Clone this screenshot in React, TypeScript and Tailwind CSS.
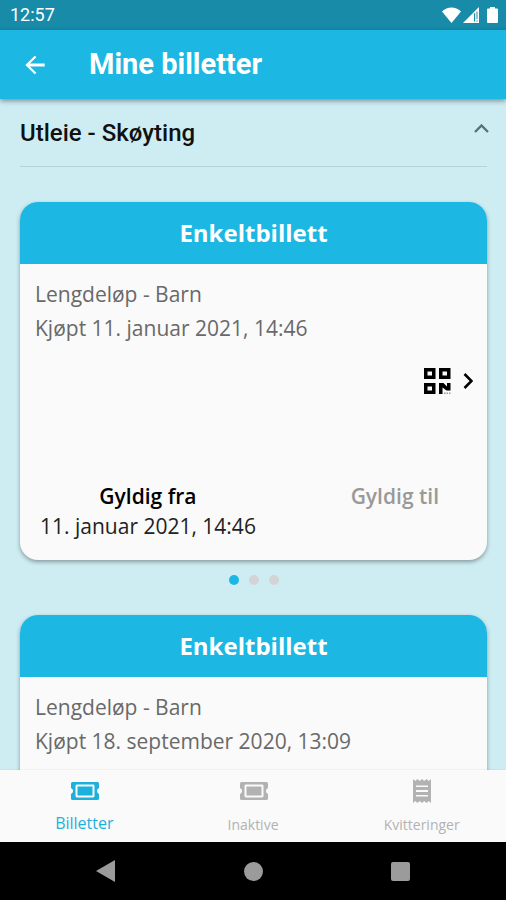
import type { ReactNode } from "react";
import { clsx } from "clsx";

interface Ticket {
  id: number;
  type: string;
  product: string;
  purchased: string;
  validFrom?: string;
  pages: number;
}

const tickets: Ticket[] = [
  {
    id: 1,
    type: "Enkeltbillett",
    product: "Lengdeløp - Barn",
    purchased: "Kjøpt 11. januar 2021, 14:46",
    validFrom: "11. januar 2021, 14:46",
    pages: 3,
  },
  {
    id: 2,
    type: "Enkeltbillett",
    product: "Lengdeløp - Barn",
    purchased: "Kjøpt 18. september 2020, 13:09",
    pages: 3,
  },
];

const StatusBar = () => (
  <div className="flex h-[30px] shrink-0 items-center justify-between bg-[#188ba9] pl-2.5 pr-2 font-[Roboto] text-lg text-white">
    <span>12:57</span>
    <div className="flex items-center">
      <svg className="h-4 w-[19px]" viewBox="0 0 19 16" fill="currentColor">
        <path d="M9.500 16 0 4.500C5.500-1 13.500-1 19 4.500z" />
      </svg>
      <svg className="ml-0.5 h-4 w-4" viewBox="0 0 16 16" fill="currentColor">
        <path
          fillRule="evenodd"
          d="M16 0v16H0zM11 6.800v7.700h1.200V5.600zM13.500 4.500v7.500h1V4.500zM13.500 13.300v1.200h1v-1.200z"
        />
      </svg>
      <svg className="ml-2 h-4 w-[11px]" viewBox="0 0 11 16" fill="currentColor">
        <path d="M3 0h5v1.500h2q1 0 1 1V15q0 1-1 1H1q-1 0-1-1V2.500q0-1 1-1h2z" />
      </svg>
    </div>
  </div>
);

const Header = () => (
  <header className="z-10 flex h-[69px] shrink-0 items-center bg-[#1cb7e2] pl-[21px] text-white shadow-[0_2px_5px_rgba(0,0,0,0.4)]">
    <button type="button" aria-label="Tilbake">
      <svg className="size-7" viewBox="0 0 24 24" fill="currentColor">
        <path d="M20.300 10.800H7.600l5.600-5.400L11.800 4 3.700 12l8.100 8 1.400-1.400-5.600-5.400h12.700z" />
      </svg>
    </button>
    <h1 className="ml-10 font-[Roboto] text-[29px] font-bold">
      Mine billetter
    </h1>
  </header>
);

const QrIcon = () => (
  <svg className="h-[26px] w-[27px]" viewBox="0 0 27 26" fill="currentColor">
    <path
      fillRule="evenodd"
      d="M0 0h11.500v11H0zM3.500 3.500v4h4.500v-4zM15 0h11.500v11H15zM18.500 3.500v4H23v-4zM0 15h11.500v11H0zM3.500 18.500v4h4.500v-4z"
    />
    <path d="M15 15h4.500l3.500 3.500V15h3.500v7.500h-4L18.500 19.500V26H15z" />
    <path
      fill="#999"
      d="M20 24.500h1.500V26H20zM22.500 24.500H24V26h-1.500zM25 24.500h1.500V26H25z"
    />
  </svg>
);

const TicketCard = ({ ticket }: { ticket: Ticket }) => (
  <article className="overflow-hidden rounded-[18px] bg-[#fafafa] shadow-[0_2px_4px_rgba(0,0,0,0.35)]">
    <h3 className="flex h-[62px] items-center justify-center bg-[#1cb7e2] text-2xl font-bold text-white">
      {ticket.type}
    </h3>
    <div className="px-[15px] pt-[13px] text-[21px] leading-[34px] text-[#696969]">
      <p>{ticket.product}</p>
      <p>{ticket.purchased}</p>
    </div>
    <div className="mt-[23px] flex justify-end pr-3.5">
      <button
        type="button"
        aria-label="Vis QR-kode"
        className="flex items-center gap-3 text-black"
      >
        <QrIcon />
        <svg
          className="h-4 w-2.5"
          viewBox="0 0 10 16"
          fill="none"
          stroke="currentColor"
          strokeWidth="2.600"
        >
          <path d="m1.500 1 7 7-7 7" />
        </svg>
      </button>
    </div>
    {ticket.validFrom && (
      <div className="mt-[87px] flex justify-between pb-[19px] pl-5 pr-12 text-[21px] leading-[30px]">
        <div className="text-center text-[#222]">
          <p className="font-semibold text-black">Gyldig fra</p>
          <p>{ticket.validFrom}</p>
        </div>
        <p className="font-semibold text-[#999]">Gyldig til</p>
      </div>
    )}
  </article>
);

const PageDots = ({ count }: { count: number }) => (
  <div className="flex justify-center gap-2.5 pt-[15px]">
    {Array.from({ length: count }, (_, i) => (
      <span
        key={i}
        className={clsx(
          "size-2.5 rounded-full",
          i === 0 ? "bg-[#1cb7e2]" : "bg-[#d4d4d6]",
        )}
      />
    ))}
  </div>
);

const TicketIcon = () => (
  <svg className="h-[18px] w-[30px]" viewBox="-2 0 30 18" fill="currentColor">
    <path
      fillRule="evenodd"
      d="M1.500 0h25Q28 0 28 1.500V6a3.200 3.200 0 0 0 0 6v4.500q0 1.500-1.500 1.500h-25Q0 18 0 16.500V12a3.200 3.200 0 0 0 0-6V1.500Q0 0 1.500 0zM6 2.600Q4.500 2.600 4.500 4v10q0 1.400 1.500 1.400h16q1.500 0 1.500-1.400V4q0-1.400-1.500-1.400z"
    />
    <rect x="6.500" y="4.500" width="15" height="9" />
  </svg>
);

const ReceiptIcon = () => (
  <svg className="h-6 w-[18px]" viewBox="0 0 18 24" fill="currentColor">
    <path
      fillRule="evenodd"
      d="M0 0l2.250 2L4.500 0l2.250 2L9 0l2.250 2L13.500 0l2.250 2L18 0v24l-2.250-2-2.250 2-2.250-2L9 24l-2.250-2-2.250 2-2.250-2L0 24zM3 6.500V8h12V6.500zM3 11v2h12v-2zM3 16v1.500h12V16z"
    />
  </svg>
);

interface TabProps {
  label: string;
  icon: ReactNode;
  active?: boolean;
}

const Tab = ({ label, icon, active }: TabProps) => (
  <a
    href="#"
    aria-current={active ? "page" : undefined}
    className={clsx(
      "flex flex-1 flex-col items-center pt-[9px]",
      active
        ? "text-base leading-6 text-[#1cb0dc]"
        : "text-sm leading-7 text-[#b2b2b2]",
    )}
  >
    <span className="flex h-6 items-center">{icon}</span>
    <span className="mt-2">{label}</span>
  </a>
);

const SystemNav = () => (
  <div className="flex h-[58px] shrink-0 items-center justify-around bg-black px-8 text-[#9b9b9b]">
    <button type="button" aria-label="Back">
      <svg className="h-[22px] w-5" viewBox="0 0 20 22" fill="currentColor">
        <path d="M19 0v22L0 11z" />
      </svg>
    </button>
    <button
      type="button"
      aria-label="Home"
      className="size-[19px] rounded-full bg-[#9b9b9b]"
    />
    <button
      type="button"
      aria-label="Recent"
      className="size-[19px] rounded-xs bg-[#9b9b9b]"
    />
  </div>
);

export default function App() {
  return (
    <div className="flex h-screen flex-col bg-[#cdedf3] font-['Open_Sans',sans-serif]">
      <StatusBar />
      <Header />
      <main className="min-h-0 flex-1 overflow-hidden pl-5 pr-[19px]">
        <button
          type="button"
          aria-expanded="true"
          className="flex h-[67px] w-full items-center justify-between font-[Roboto] text-2xl font-medium text-[#111]"
        >
          Utleie - Skøyting
          <svg
            className="-mr-0.5 mb-2 h-[9px] w-[15px] text-[#5a7077]"
            viewBox="0 0 15 9"
            fill="none"
            stroke="currentColor"
            strokeWidth="2.400"
          >
            <path d="m1 8 6.500-6.500L14 8" />
          </svg>
        </button>
        <div className="border-t border-[#b0d3dc]" />
        <div className="flex flex-col gap-[30px] pt-[35px]">
          {tickets.map((ticket) => (
            <section key={ticket.id}>
              <TicketCard ticket={ticket} />
              <PageDots count={ticket.pages} />
            </section>
          ))}
        </div>
      </main>
      <nav className="z-10 flex h-[72px] shrink-0 bg-[#fafafa] shadow-[0_-1px_1px_rgba(0,0,0,0.03)]">
        <Tab label="Billetter" icon={<TicketIcon />} active />
        <Tab label="Inaktive" icon={<TicketIcon />} />
        <Tab label="Kvitteringer" icon={<ReceiptIcon />} />
      </nav>
      <SystemNav />
    </div>
  );
}
